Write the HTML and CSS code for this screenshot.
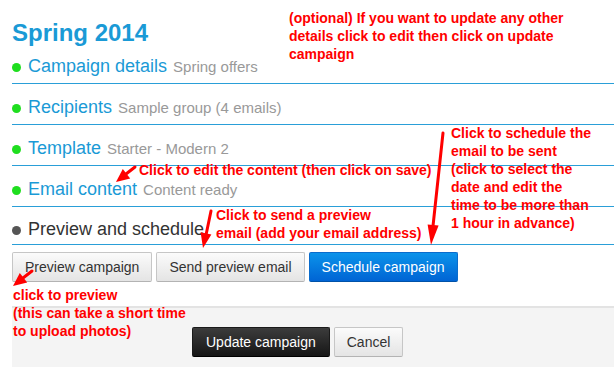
FILE: index.html
```html
<!DOCTYPE html>
<html>
<head>
<meta charset="utf-8">
<link rel="stylesheet" href="styles.css">
</head>
<body>
<div class="page">
  <h1 class="title">Spring 2014</h1>
  <ul class="steps">
    <li class="step"><span class="dot dot-done"></span><a class="step-name">Campaign details</a> <span class="step-info">Spring offers</span></li>
    <li class="step"><span class="dot dot-done"></span><a class="step-name">Recipients</a> <span class="step-info">Sample group (4 emails)</span></li>
    <li class="step"><span class="dot dot-done"></span><a class="step-name">Template</a> <span class="step-info">Starter - Modern 2</span></li>
    <li class="step"><span class="dot dot-done"></span><a class="step-name">Email content</a> <span class="step-info">Content ready</span></li>
    <li class="step step-current"><span class="dot dot-current"></span><span class="step-name-current">Preview and schedule</span></li>
  </ul>
  <div class="actions">
    <button class="btn">Preview campaign</button>
    <button class="btn">Send preview email</button>
    <button class="btn btn-primary">Schedule campaign</button>
  </div>
  <div class="form-actions">
    <button class="btn btn-dark">Update campaign</button>
    <button class="btn">Cancel</button>
  </div>

  <div class="note note-optional">(optional) If you want to update any other<br>details click to edit then click on update<br>campaign</div>
  <div class="note note-content">Click to edit the content (then click on save)</div>
  <div class="note note-send">Click to send a preview<br>email (add your email address)</div>
  <div class="note note-schedule">Click to schedule the<br>email to be sent<br>(click to select the<br>date and edit the<br>time to be more than<br>1 hour in advance)</div>
  <div class="note note-preview">click to preview<br>(this can take a short time<br>to upload photos)</div>

  <svg class="arrows" width="614" height="367" viewBox="0 0 614 367">
    <g stroke="#ff0000" stroke-width="3" stroke-linecap="round" fill="none">
      <line x1="135" y1="167" x2="126" y2="174"/>
      <line x1="211" y1="211" x2="206" y2="235"/>
      <line x1="443" y1="133" x2="433" y2="226"/>
      <line x1="32" y1="271" x2="23" y2="278"/>
    </g>
    <g fill="#ff0000">
      <polygon points="116,182 130.2,178.6 122.8,168.9"/>
      <polygon points="203,248 211.4,234.5 200.6,232.2"/>
      <polygon points="431,245 438.6,225.6 427.6,224.4"/>
      <polygon points="13,286 27.2,282.6 19.8,272.9"/>
    </g>
  </svg>
</div>
</body>
</html>
```

FILE: styles.css
```css
html, body {
  margin: 0;
  padding: 0;
  background: #ffffff;
}
body {
  font-family: "Liberation Sans", Arial, sans-serif;
  overflow: hidden;
}
.page {
  position: relative;
  width: 614px;
  height: 367px;
  padding-left: 12px;
  box-sizing: border-box;
}
.title {
  margin: 0;
  padding-top: 22px;
  font-size: 24px;
  line-height: 21px;
  font-weight: bold;
  color: #1a9ad6;
}
.steps {
  list-style: none;
  margin: 0;
  padding: 0;
}
.step {
  height: 22px;
  padding: 12px 0 6px;
  font-size: 18px;
  line-height: 22px;
  border-bottom: 1px solid #2a9fd8;
  white-space: nowrap;
}
.step-current {
  padding: 11px 0 4px;
}
.dot {
  display: inline-block;
  width: 9px;
  height: 9px;
  border-radius: 50%;
  margin-right: 7px;
  vertical-align: 0;
}
.dot-done {
  background: #1fde1f;
}
.dot-current {
  background: #555555;
}
.step-name {
  color: #1a9ad6;
  text-decoration: none;
}
.step-name-current {
  color: #333333;
}
.step-info {
  font-size: 15px;
  line-height: 16px;
  color: #999999;
  margin-left: 1px;
}
.actions {
  display: flex;
  gap: 4px;
  margin-top: 7px;
}
.btn {
  font-family: "Liberation Sans", Arial, sans-serif;
  font-size: 14px;
  line-height: 20px;
  padding: 4px 12px;
  border: 1px solid #c6c6c6;
  border-bottom-color: #b3b3b3;
  border-radius: 2px;
  color: #333333;
  background: linear-gradient(#fbfbfb, #e4e4e4);
  margin: 0;
}
.btn-primary {
  color: #ffffff;
  background: linear-gradient(#0b93ea, #0064d4);
  border-color: #0a6ccc;
  border-bottom-color: #0052a8;
}
.btn-dark {
  color: #ffffff;
  padding: 4px 13px;
  background: linear-gradient(#3c3c3c, #161616);
  border-color: #1a1a1a;
  border-bottom-color: #000000;
}
.form-actions {
  display: flex;
  gap: 4px;
  margin-top: 24px;
  padding: 19px 0 20px 180px;
  background: #f4f4f4;
  border-top: 2px solid #e3e3e3;
}
.note {
  position: absolute;
  color: #ff0000;
  font-weight: bold;
  font-size: 14px;
  line-height: 18px;
  white-space: nowrap;
}
.note-optional { left: 289px; top: 9px; }
.note-content { left: 139px; top: 161px; }
.note-send { left: 216px; top: 206px; }
.note-schedule { left: 451px; top: 124px; }
.note-preview { left: 13px; top: 286px; }
.arrows {
  position: absolute;
  left: 0;
  top: 0;
  pointer-events: none;
}
```
